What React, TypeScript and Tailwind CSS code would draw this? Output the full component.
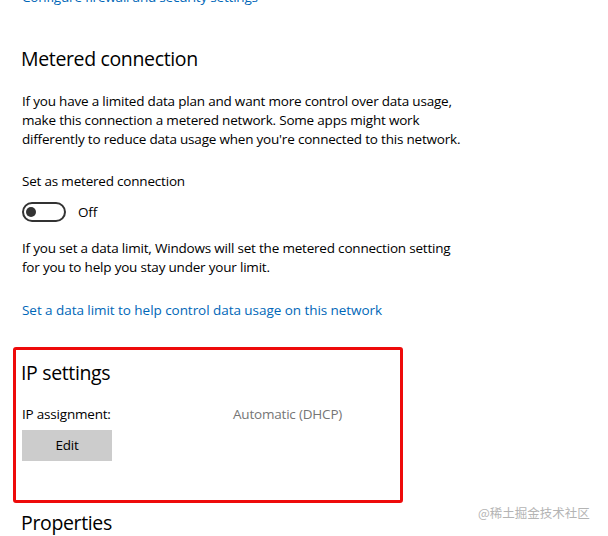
import React from 'react';

const font = { fontFamily: '"Open Sans", "Noto Sans", sans-serif' };

const body = 'text-[13.5px] leading-[19px] tracking-[-0.2px]';
const heading = 'text-[19.5px] leading-[28px] tracking-[-0.35px] font-normal';

const App: React.FC = () => {
  return (
    <div className="relative w-[608px] h-[536px] overflow-hidden bg-white text-black" style={font}>
      <div className="pl-[22px]">
        <a className={`block mt-[-12px] text-[#0067b8] ${body}`}>Configure firewall and security settings</a>

        <h2 className={`mt-[38px] ml-[-1px] ${heading}`}>Metered connection</h2>
        <p className={`mt-[19px] ${body}`}>
          If you have a limited data plan and want more control over data usage,
          <br />
          make this connection a metered network. Some apps might work
          <br />
          differently to reduce data usage when you're connected to this network.
        </p>

        <div className={`mt-[23px] ${body}`}>Set as metered connection</div>
        <div className="mt-[11px] flex items-center gap-3">
          <div className="w-[44px] h-[20px] rounded-full border-2 border-[#333333] flex items-center pl-[2px]">
            <div className="w-[10px] h-[10px] rounded-full bg-[#333333]" />
          </div>
          <span className={body}>Off</span>
        </div>

        <p className={`mt-[17px] ${body}`}>
          If you set a data limit, Windows will set the metered connection setting
          <br />
          for you to help you stay under your limit.
        </p>

        <a className={`block mt-[24px] text-[#0067b8] text-[13.5px] leading-[19px] tracking-[-0.05px]`}>
          Set a data limit to help control data usage on this network
        </a>

        <div className="mt-[27px] ml-[-9px] w-[390px] border-[3px] border-[#ee0a0a] rounded-[3px] pl-[6px] pt-[9px] pb-[39px]">
          <h2 className={`ml-[-1px] ${heading}`}>IP settings</h2>
          <div className={`mt-[18px] flex ${body}`}>
            <span className="w-[211px]">IP assignment:</span>
            <span className="text-[#767676]">Automatic (DHCP)</span>
          </div>
          <button className={`mt-[6px] w-[90px] h-[31px] bg-[#cccccc] text-black ${body}`}>Edit</button>
        </div>

        <h2 className={`mt-[6px] ml-[-1px] ${heading}`}>Properties</h2>
      </div>

      <div
        className="absolute left-[478px] top-[504px] text-[12.5px] leading-[18px] text-[#b4b4b4]"
        style={{ fontFamily: '"Noto Sans CJK SC", "Noto Sans", sans-serif' }}
      >
        @稀土掘金技术社区
      </div>
    </div>
  );
};

export default App;
